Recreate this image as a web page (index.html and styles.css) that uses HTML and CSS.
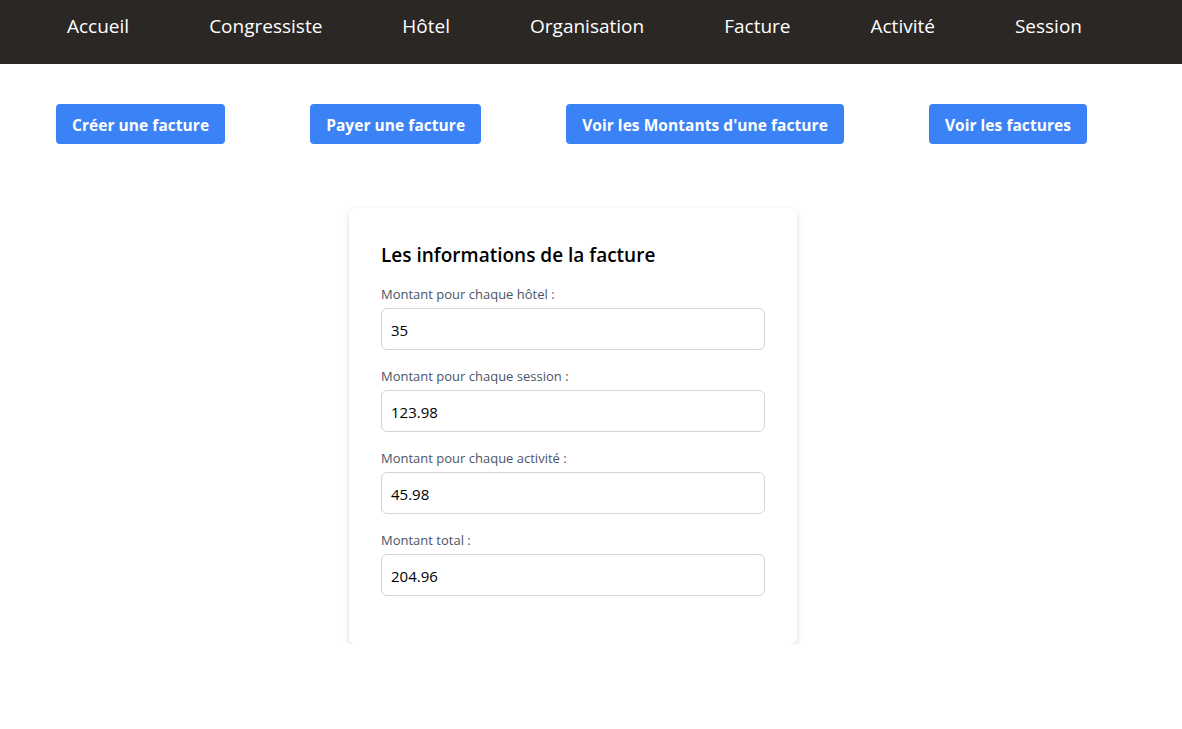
FILE: index.html
```html
<!DOCTYPE html>
<html lang="fr">
<head>
<meta charset="utf-8">
<title>Facture</title>
<link rel="stylesheet" href="styles.css">
</head>
<body>
<nav class="navbar">
  <a class="nav-link" href="#">Accueil</a>
  <a class="nav-link" href="#">Congressiste</a>
  <a class="nav-link" href="#">Hôtel</a>
  <a class="nav-link" href="#">Organisation</a>
  <a class="nav-link" href="#">Facture</a>
  <a class="nav-link" href="#">Activité</a>
  <a class="nav-link" href="#">Session</a>
</nav>
<div class="actions">
  <button class="btn">Créer une facture</button>
  <button class="btn">Payer une facture</button>
  <button class="btn">Voir les Montants d'une facture</button>
  <button class="btn">Voir les factures</button>
</div>
<main class="main">
  <section class="card">
    <h2 class="card-title">Les informations de la facture</h2>
    <div class="field">
      <label class="field-label">Montant pour chaque hôtel :</label>
      <div class="field-input">35</div>
    </div>
    <div class="field">
      <label class="field-label">Montant pour chaque session :</label>
      <div class="field-input">123.98</div>
    </div>
    <div class="field">
      <label class="field-label">Montant pour chaque activité :</label>
      <div class="field-input">45.98</div>
    </div>
    <div class="field">
      <label class="field-label">Montant total :</label>
      <div class="field-input">204.96</div>
    </div>
  </section>
</main>
</body>
</html>
```

FILE: styles.css
```css
* { box-sizing: border-box; }
body {
  margin: 0;
  font-family: "Open Sans", "Noto Sans", sans-serif;
  background: #fff;
  color: #000;
}
.navbar {
  height: 64px;
  background: #2b2725;
  display: flex;
  align-items: flex-start;
  padding-left: 67px;
  gap: 80px;
}
.nav-link {
  color: #fff;
  text-decoration: none;
  font-size: 19px;
  line-height: 26px;
  margin-top: 13px;
}
.actions {
  display: flex;
  gap: 85px;
  padding: 40px 0 0 56px;
}
.btn {
  height: 40px;
  padding: 1px 16px 0;
  background: #3b82f6;
  color: #fff;
  border: none;
  border-radius: 4px;
  font-family: inherit;
  font-weight: 700;
  font-size: 15.5px;
  letter-spacing: 0.05px;
}
.main {
  display: flex;
  justify-content: center;
  padding-top: 64px;
  padding-right: 36px;
}
.card {
  width: 448px;
  padding: 32px;
  background: #fff;
  border-radius: 6px;
  box-shadow: 0 4px 8px -1px rgba(0,0,0,.13), 0 1px 4px 0 rgba(0,0,0,.06);
}
.card-title {
  margin: 0 0 16px;
  padding-top: 2px;
  font-size: 19px;
  line-height: 26px;
  font-weight: 600;
}
.field { margin-bottom: 16px; }
.field-label {
  display: block;
  font-size: 13px;
  line-height: 20px;
  color: #4a5568;
  margin-bottom: 4px;
}
.field-input {
  height: 42px;
  border: 1px solid #d1d5db;
  border-radius: 6px;
  padding: 2px 9px 0;
  display: flex;
  align-items: center;
  font-size: 15px;
}
```
